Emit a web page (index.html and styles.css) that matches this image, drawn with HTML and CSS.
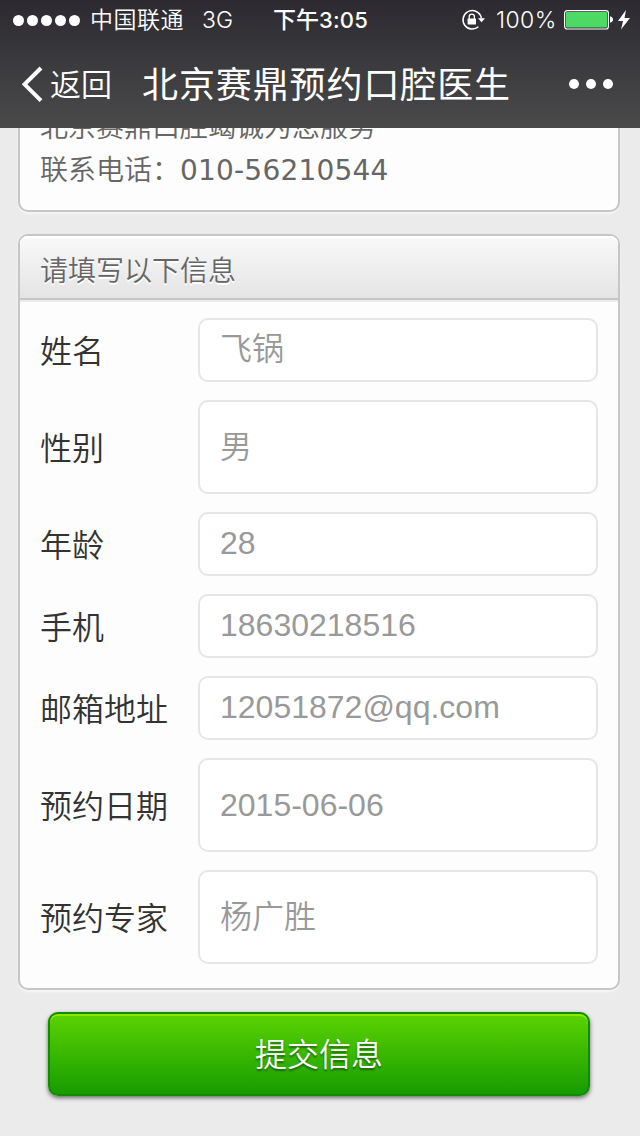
FILE: index.html
```html
<!DOCTYPE html>
<html lang="zh-CN">
<head>
  <meta charset="UTF-8" />
  <meta name="viewport" content="width=device-width, initial-scale=1.0"/>
  <title>北京赛鼎预约口腔医生</title>
  <link rel="stylesheet" href="styles.css">
</head>
<body>

  <!-- Top bar -->
  <header class="topbar">
    <div class="status">
      <div class="signal"><i></i><i></i><i></i><i></i><i></i></div>
      <span class="carrier">中国联通</span>
      <span class="network">3G</span>
      <span class="time">下午<b>3:05</b></span>
      <svg class="lock" width="24" height="22" viewBox="0 0 24 22">
        <path d="M19.3 6A9.3 9.3 0 1 0 17.4 17.8M19.3 6Q20.2 7.6 20.4 9.5" fill="none" stroke="#fff" stroke-width="1.5"/>
        <path d="M17 9.3h7l-3.5 4z" fill="#fff"/>
        <rect x="6.6" y="9.6" width="8.4" height="6" rx=".6" fill="#fff"/>
        <path d="M8.2 10V7.8a2.6 2.6 0 0 1 5.2 0V10" fill="none" stroke="#fff" stroke-width="1.3"/>
      </svg>
      <span class="percent">100%</span>
      <svg class="battery" width="50" height="20" viewBox="0 0 50 20">
        <rect x=".6" y=".6" width="43.8" height="18.4" rx="2.5" fill="none" stroke="#fff" stroke-width="1.2"/>
        <rect x="2" y="2" width="41" height="15.6" rx="1" fill="#4cd964"/>
        <path d="M46 6.3q3 .7 3 3.2t-3 3.2z" fill="#fff"/>
      </svg>
      <svg class="bolt" width="12" height="20" viewBox="0 0 12 20">
        <path d="M8 0 0 11h5L3 19.5 12 8H6.5z" fill="#fff"/>
      </svg>
    </div>
    <div class="nav">
      <svg class="back-arrow" width="22" height="36" viewBox="0 0 22 36">
        <path d="M19 2 2.6 18.3 19 34.6" fill="none" stroke="#fff" stroke-width="4"/>
      </svg>
      <span class="back">返回</span>
      <h1 class="title">北京赛鼎预约口腔医生</h1>
      <div class="more"><i></i><i></i><i></i></div>
    </div>
  </header>

  <main class="content">
    <section class="panel intro">
      <p>北京赛鼎口腔竭诚为您服务</p>
      <p>联系电话：<span class="tel">010-56210544</span></p>
    </section>

    <section class="panel">
      <h2 class="panel-head">请填写以下信息</h2>
      <div class="form">
        <div class="row"><span class="label">姓名</span><div class="field">飞锅</div></div>
        <div class="row"><span class="label">性别</span><div class="field tall">男</div></div>
        <div class="row"><span class="label">年龄</span><div class="field">28</div></div>
        <div class="row"><span class="label">手机</span><div class="field">18630218516</div></div>
        <div class="row"><span class="label">邮箱地址</span><div class="field">12051872@qq.com</div></div>
        <div class="row"><span class="label">预约日期</span><div class="field tall">2015-06-06</div></div>
        <div class="row"><span class="label">预约专家</span><div class="field tall">杨广胜</div></div>
      </div>
    </section>

    <button class="submit">提交信息</button>
  </main>

</body>
</html>
```
FILE: styles.css
```css
/* Reset */
* { margin: 0; padding: 0; box-sizing: border-box; }

body {
  font-family: "Liberation Sans", "Noto Sans CJK SC", sans-serif;
  font-weight: 350;
  background: #ebebeb;
  height: 1136px;
  display: flex;
  flex-direction: column;
  overflow: hidden;
}

/* Top bar */
.topbar {
  flex: none;
  height: 128px;
  color: #fff;
  background: linear-gradient(#2c2a30, #4a4a4b);
}
.status {
  display: flex;
  align-items: center;
  height: 40px;
  padding-left: 13px;
  font-size: 24px;
  line-height: 40px;
  white-space: nowrap;
}
.signal { display: flex; gap: 3px; width: 77px; flex: none; }
.signal i { width: 11px; height: 11px; border-radius: 50%; background: #fff; }
.carrier { width: 112px; font-size: 23px; line-height: 42px; letter-spacing: 0.5px; }
.network { width: 71px; font-family: Inter, sans-serif; font-size: 23px; font-weight: 300; line-height: 42px; }
.time { width: 188px; font-size: 23px; font-weight: 500; line-height: 42px; }
.time b { font-family: Inter, sans-serif; font-size: 22px; font-weight: 500; letter-spacing: 0.2px; }
.lock { width: 24px; margin-right: 11px; flex: none; }
.percent { width: 68px; font-family: Inter, sans-serif; font-size: 23px; font-weight: 300; line-height: 42px; letter-spacing: 0.4px; }
.battery { width: 50px; margin-right: 4px; flex: none; }
.bolt { flex: none; }

.nav {
  display: flex;
  align-items: center;
  height: 88px;
  padding-left: 22px;
  white-space: nowrap;
}
.back-arrow { flex: none; }
.back { width: 98px; padding: 0 0 3px 6px; font-size: 31px; }
.title { width: 427px; padding-bottom: 5px; font-size: 36px; font-weight: 400; letter-spacing: 0.9px; }
.more { display: flex; gap: 7px; }
.more i { width: 10px; height: 10px; border-radius: 50%; background: #fff; }

/* Scrolled page content */
.content {
  flex: 1;
  min-height: 0;
  padding: 0 20px 0 18px;
  overflow: hidden;
}
.panel {
  border: 2px solid #c6c6c6;
  border-radius: 10px;
  background: #fdfdfd;
  box-shadow: 0 2px 2px #f6f6f6;
}
.intro {
  height: 144px;
  margin: -60px 0 22px;
  padding: 36px 20px 0;
  font-size: 28px;
  line-height: 43px;
  color: #666;
}
.tel { font-family: "DejaVu Sans", sans-serif; font-weight: 400; letter-spacing: 0.2px; }

.panel-head {
  height: 64px;
  padding-left: 20px;
  font-size: 28px;
  font-weight: 350;
  line-height: 71px;
  color: #666;
  text-shadow: 0 2px 0 #fff;
  border-bottom: 2px solid #c6c6c6;
  border-radius: 8px 8px 0 0;
  background: linear-gradient(#f9f9f9, #e4e4e4);
  box-shadow: inset 0 2px 0 #fff, 0 2px 0 #ececec;
}

.form {
  display: flex;
  flex-direction: column;
  gap: 18px;
  padding: 18px 20px 24px;
}
.row { display: flex; align-items: center; }
.label { width: 158px; padding-top: 4px; font-size: 32px; line-height: 60px; color: #333; }
.field {
  width: 400px;
  height: 64px;
  padding-left: 20px;
  border: 2px solid #e6e6e6;
  border-radius: 10px;
  background: #fff;
  font-size: 32px;
  line-height: 58px;
  color: #999;
}
.field.tall { height: 94px; line-height: 90px; }

.submit {
  display: block;
  width: 542px;
  height: 84px;
  margin: 22px 0 0 30px;
  padding-top: 2px;
  border: 2px solid #108c00;
  border-radius: 10px;
  background: linear-gradient(#5bd300, #179c00);
  box-shadow: inset 0 2px 0 #8fe800, 0 2px 4px rgba(0,0,0,0.55);
  font: 350 32px/78px "Liberation Sans", "Noto Sans CJK SC", sans-serif;
  color: #fff;
  text-shadow: 0 2px 2px rgba(0,0,0,0.45);
}
```
